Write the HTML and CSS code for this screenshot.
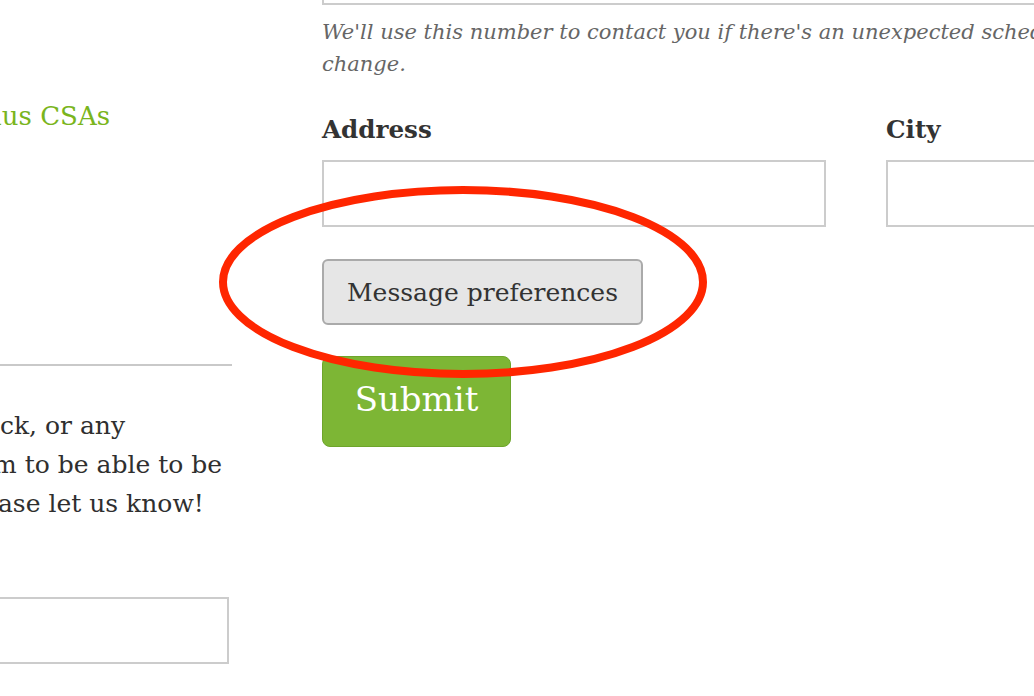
FILE: index.html
```html
<!DOCTYPE html>
<html lang="en">
<head>
<meta charset="utf-8">
<title>Sign up</title>
<link rel="stylesheet" href="styles.css">
</head>
<body>
<div class="page">
  <aside class="side">
    <a class="side-link" href="#">Bonus CSAs</a>
    <hr class="side-rule">
    <p class="side-text">If you have any other feedback, or any<br>features you'd like the system to be able to be<br>doing for your members, please let us know!</p>
    <div class="field-box side-input"></div>
  </aside>
  <main class="form">
    <div class="field-box top-input"></div>
    <p class="help">We'll use this number to contact you if there's an unexpected schedule change.</p>
    <div class="row">
      <div class="field">
        <label class="label">Address</label>
        <div class="field-box"></div>
      </div>
      <div class="field">
        <label class="label">City</label>
        <div class="field-box"></div>
      </div>
    </div>
    <button class="btn-secondary" type="button">Message preferences</button>
    <button class="btn-submit" type="submit">Submit</button>
  </main>
</div>
<svg class="annotation" width="1034" height="696" viewBox="0 0 1034 696">
  <ellipse cx="463" cy="282" rx="240" ry="92" fill="none" stroke="#ff2600" stroke-width="8"/>
</svg>
</body>
</html>
```
FILE: styles.css
```css
html, body {
  margin: 0;
  padding: 0;
  background: #fff;
  overflow: hidden;
  width: 1034px;
  height: 696px;
}
body {
  font-family: "DejaVu Serif", "Liberation Serif", serif;
  color: #333;
  position: relative;
}
.page {
  display: flex;
  gap: 90px;
  align-items: flex-start;
}
.side {
  flex: none;
  width: 595px;
  margin-left: -363px;
  display: flex;
  flex-direction: column;
}
.side-link {
  align-self: flex-end;
  margin-top: 99px;
  margin-right: 122px;
  font-size: 26px;
  line-height: 34px;
  color: #7ab51d;
  text-decoration: none;
  white-space: nowrap;
}
.side-rule {
  align-self: stretch;
  margin: 231px 0 0;
  border: 0;
  border-top: 2px solid #c9c9c9;
  height: 0;
}
.side-text {
  margin: 40px 0 0;
  font-size: 25px;
  line-height: 39px;
  white-space: nowrap;
  color: #2f2f2f;
}
.side-input {
  margin-top: 74px;
  margin-right: 3px;
}
.form {
  flex: none;
  width: 780px;
  display: flex;
  flex-direction: column;
  align-items: flex-start;
}
.field-box {
  box-sizing: border-box;
  height: 67px;
  border: 2px solid #cccccc;
  background: #fff;
}
.top-input {
  align-self: stretch;
  margin-top: -62px;
}
.help {
  margin: 11px 0 0;
  font-style: italic;
  font-size: 21px;
  line-height: 32px;
  color: #666;
}
.row {
  align-self: stretch;
  display: grid;
  grid-template-columns: 504px 1fr;
  column-gap: 60px;
  margin-top: 34px;
}
.field {
  display: flex;
  flex-direction: column;
}
.label {
  font-weight: bold;
  font-size: 24.6px;
  line-height: 32px;
  color: #333;
  margin-bottom: 14px;
}
.btn-secondary {
  margin-top: 32px;
  box-sizing: border-box;
  width: 321px;
  height: 66px;
  background: #e6e6e6;
  border: 2px solid #aaaaaa;
  border-radius: 6px;
  font-family: inherit;
  font-size: 25px;
  color: #333;
  padding: 0;
}
.btn-submit {
  margin-top: 31px;
  box-sizing: border-box;
  width: 189px;
  height: 91px;
  background: #7db635;
  border: 1px solid #6ea52b;
  border-radius: 8px;
  font-family: inherit;
  font-size: 34px;
  color: #fff;
  padding: 0 0 6px;
}
.annotation {
  position: absolute;
  left: 0;
  top: 0;
  pointer-events: none;
}
```
